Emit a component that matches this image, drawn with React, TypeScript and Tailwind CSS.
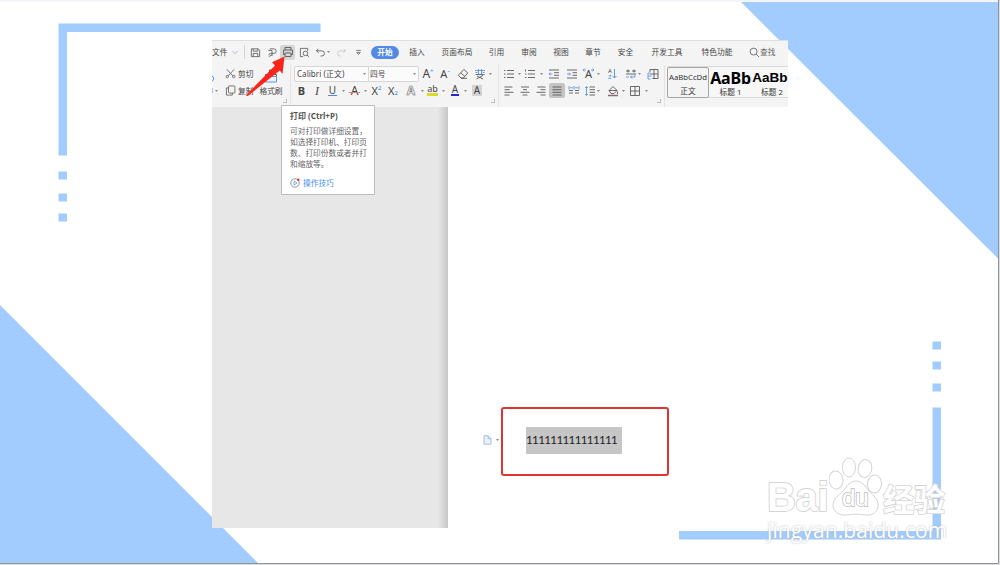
import type { ReactNode } from 'react'

const INK = '#5a5a5a'
const BLUE = '#5b97e6'

const tabs = [
  { label: '插入', width: 'w-9' },
  { label: '页面布局', width: 'w-11' },
  { label: '引用', width: 'w-[35px]' },
  { label: '审阅', width: 'w-[30px]' },
  { label: '视图', width: 'w-[34px]' },
  { label: '章节', width: 'w-[30px]' },
  { label: '安全', width: 'w-[35px]' },
  { label: '开发工具', width: 'w-12' },
  { label: '特色功能', width: 'w-[52px]' },
]

function Cell({ w, children }: { w: string; children?: ReactNode }) {
  return <div className={`flex h-full shrink-0 items-center justify-center ${w}`}>{children}</div>
}

function Icon({ children, color = INK, size = 'size-3' }: { children: ReactNode; color?: string; size?: string }) {
  return (
    <svg className={`shrink-0 ${size}`} viewBox="0 0 12 12" fill="none" stroke={color} strokeWidth={0.9}>
      {children}
    </svg>
  )
}

function Caret({ w = 'w-1' }: { w?: string }) {
  return (
    <Cell w={w}>
      <svg className="h-[2px] w-[3px] shrink-0" viewBox="0 0 3 2">
        <path d="M0 0h3L1.5 2z" fill="#8a8a8a" />
      </svg>
    </Cell>
  )
}

function Corner() {
  return (
    <svg className="absolute bottom-[4px] right-[3px] size-1" viewBox="0 0 4 4" fill="none" stroke="#aaa" strokeWidth={0.8}>
      <path d="M3.5 0v3.5H0" />
    </svg>
  )
}

function Backdrop() {
  return (
    <svg className="absolute inset-0 h-[565px] w-[1000px]" viewBox="0 0 1000 565" fill="#a2cbfe">
      <rect width="1000" height="1.5" fill="#f1f1fb" />
      <path d="M741 2H998V258.500Z" />
      <path d="M0 305L258 563H0Z" />
      <path d="M58.500 23.500H320.500V32H67V155.500H58.500Z" />
      <path d="M58.500 171.500h8.500v8h-8.500zM58.500 193.500h8.500v8h-8.500zM58.500 213.500h8.500v8h-8.500z" />
      <path d="M932.500 341.500h8.500v8h-8.500zM932.500 361.500h8.500v8h-8.500zM932.500 383.500h8.500v8h-8.500z" />
      <path d="M932.500 407.500H941V539.500H679V531H932.500Z" />
      <path d="M0 563.500H998.500V0" fill="none" stroke="#8f949b" />
      <path d="M0 564.500H999.500V0" fill="none" stroke="#dcdcdc" />
    </svg>
  )
}

function TabRow() {
  return (
    <div className="flex h-6 items-center pb-[2px]">
      <span className="w-4 shrink-0">文件</span>
      <Cell w="w-[14px]">
        <Icon size="size-2" color="#999"><path d="M2 4.500l4 4 4-4" /></Icon>
      </Cell>
      <Cell w="w-[5px]"><div className="h-[14px] w-px bg-[#d4d4d4]" /></Cell>
      <Cell w="w-[17px]">
        <Icon size="size-[11px]"><path d="M1.500 2h7.500l1.500 1.500V10.500h-9zM3.500 2v2.500h5V2M3.500 10.500V7h5v3.500" /></Icon>
      </Cell>
      <Cell w="w-4">
        <Icon size="size-[11px]"><path d="M3 2h4.500a2.500 2.500 0 0 1 0 5H5.500V3.800M1.500 3.800h4M5.500 7c-2-.5-3.500.5-3.500 2M2 10.500l3.500-2M5.500 7v3" /></Icon>
      </Cell>
      <div className="flex h-[15px] w-[15px] shrink-0 items-center justify-center rounded-[2px] bg-[#d6d6d6]">
        <Icon><path d="M3 4V1.500h6V4M3 8.500H1.500V4h9v4.500H9M3 7h6v3.500H3z" /></Icon>
      </div>
      <Cell w="w-[18px]">
        <Icon size="size-[11px]"><path d="M4.500 10.500h-3v-9h8v3" /><circle cx="7" cy="7" r="2.500" /><path d="M8.800 8.800l2.200 2" /></Icon>
      </Cell>
      <div className="w-px shrink-0" />
      <Cell w="w-3">
        <Icon size="size-[11px]"><path d="M3.500 2L1.500 4.200l2.500 2M1.500 4.200H7.500a2.800 2.800 0 0 1 0 5.600H6" /></Icon>
      </Cell>
      <Caret w="w-[5px]" />
      <Cell w="w-5">
        <Icon color="#c6c6c6" size="size-[11px]"><path d="M8.500 2l2 2.200-2.500 2M10.500 4.200H4.500a2.800 2.800 0 0 0 0 5.600H5" /></Icon>
      </Cell>
      <Cell w="w-[14px]">
        <Icon size="size-[7px]"><path d="M2 2.500h8M3 6h6L6 9.500z" strokeWidth={1.300} /></Icon>
      </Cell>
      <div className="ml-[6px] flex h-[13px] w-7 shrink-0 items-center justify-center rounded-full bg-[#5289e3] font-bold text-white">
        开始
      </div>
      {tabs.map((tab) => (
        <Cell key={tab.label} w={tab.width}>{tab.label}</Cell>
      ))}
      <div className="ml-[6px] flex shrink-0 items-center">
        <Icon size="size-[11px]"><circle cx="5" cy="5" r="3.800" /><path d="M7.800 7.800l3.200 3.200" /></Icon>
        <span className="text-[#666]">查找</span>
      </div>
    </div>
  )
}

function ClipboardGroup() {
  return (
    <div className="relative flex w-[78px] shrink-0">
      <div className="w-[10px]">
        <div className="flex h-[17px] items-end">
          <svg className="size-[6px]" viewBox="0 0 6 6" fill="none" stroke={BLUE}><path d="M0 .5h1q2 2.500-1 5" /></svg>
        </div>
        <div className="flex h-[17px] items-center">
          <div className="h-[5px] w-[1px] bg-[#a9c8f2]" />
          <Caret w="w-[7px]" />
        </div>
      </div>
      <div className="w-[34px]">
        <div className="flex h-[17px] items-center">
          <Cell w="w-4">
            <Icon size="size-[11px]"><path d="M2 1.500l6.500 7M10 1.500L3.500 8.500" /><circle cx="2.500" cy="9.300" r="1.300" /><circle cx="9.500" cy="9.300" r="1.300" /></Icon>
          </Cell>
          剪切
        </div>
        <div className="flex h-[17px] items-center">
          <Cell w="w-4">
            <Icon size="size-[11px]"><rect x="3.800" y="1" width="7" height="7.800" rx="1" /><path d="M3.800 3.200H1.500V11h6.500V8.800" /></Icon>
          </Cell>
          复制
        </div>
      </div>
      <div className="flex w-[30px] flex-col items-center">
        <div className="flex h-[18px] items-end">
          <svg className="h-[14px] w-[14px]" viewBox="0 0 14 14" fill="none" stroke={INK}>
            <path d="M1.500 7.500v-2h4V1H8.500v4.500h4v2" />
            <path d="M1.500 7.500h11v5.500h-11z" stroke={BLUE} fill="#eaf3ff" />
          </svg>
        </div>
        <span className="flex h-4 items-center">格式刷</span>
      </div>
      <Corner />
    </div>
  )
}

function FontGroup() {
  return (
    <div className="relative w-[208px] shrink-0 border-l border-[#e4e4e4] pl-[3px]">
      <div className="flex h-[17px] items-center">
        <div className="flex h-4 w-[75px] shrink-0 items-center justify-between rounded-l-[2px] border border-[#d6d6d6] bg-[#fbfbfb] pl-[2px] pr-[2px]">
          <span className="text-[8px] tracking-[0.050px]">Calibri (正文)</span>
          <Caret />
        </div>
        <div className="flex h-4 w-[50px] shrink-0 items-center justify-between rounded-r-[2px] border border-l-0 border-[#d6d6d6] bg-[#fbfbfb] pl-[1px] pr-[2px]">
          <span>四号</span>
          <Caret />
        </div>
        <Cell w="w-[18px]">
          <span className="text-[12px]">A</span><span className="mb-[5px] text-[6px] text-[#3f86e0]">+</span>
        </Cell>
        <Cell w="w-4">
          <span className="text-[11px]">A</span><span className="mb-[5px] text-[7px] text-[#3f86e0]">-</span>
        </Cell>
        <Cell w="w-5">
          <Icon><path d="M6.800 1.500l4 3.500-4.500 5H4L1.300 7.300zM3.800 4.800l4 3.600M4 10.300h6" /></Icon>
        </Cell>
        <Cell w="w-[14px]">
          <Icon color={BLUE}>
            <path d="M1 2.500h10M4.500 1v5M7.500 1v5M1.500 4.500h2M8.500 4.500h2" />
            <path d="M1.500 6.500h9M3 8l6 3M9 7.500L2.500 11" stroke={INK} />
          </Icon>
        </Cell>
        <Caret w="w-[6px]" />
      </div>
      <div className="flex h-[17px] items-center">
        <Cell w="w-[15px]"><span className="text-[11px] font-bold">B</span></Cell>
        <Cell w="w-4"><span className="font-['Liberation_Serif'] text-[12px] italic">I</span></Cell>
        <Cell w="w-[15px]"><span className="border-b border-[#4a8be0] px-px text-[10px] leading-[9px]">U</span></Cell>
        <Caret w="w-[6px]" />
        <Cell w="w-[17px]">
          <span className="relative text-[12px]">
            A
            <span className="absolute -left-[2px] -right-[2px] top-[7px] h-px bg-[#e58080]" />
          </span>
        </Cell>
        <Caret />
        <Cell w="w-[19px]">
          <span className="text-[11px]">X</span><span className="mb-[5px] text-[6px] text-[#3f86e0]">2</span>
        </Cell>
        <Cell w="w-[14px]">
          <span className="text-[11px]">X</span><span className="mt-[5px] text-[6px] text-[#3f86e0]">2</span>
        </Cell>
        <Cell w="w-5 pl-[2px]">
          <span className="text-[12px] font-bold text-[#f4f4f4] [-webkit-text-stroke:0.6px_#666]">A</span>
        </Cell>
        <Caret />
        <Cell w="w-[17px]">
          <span className="border-b-[3px] border-[#dbd92a] text-[9px] leading-[8px]">ab</span>
        </Cell>
        <Caret />
        <Cell w="w-[18px] pl-[2px]">
          <span className="border-b-2 border-[#2626d8] px-px text-[10px] leading-[9px]">A</span>
        </Cell>
        <Caret />
        <Cell w="w-5">
          <span className="bg-[#d4d4d4] px-[2px] text-[10px] leading-[11px]">A</span>
        </Cell>
      </div>
      <Corner />
    </div>
  )
}

function ParagraphGroup() {
  return (
    <div className="relative w-[166px] shrink-0 border-l border-[#e4e4e4] pl-[2px]">
      <div className="flex h-[17px] items-center">
        <Cell w="w-4"><Icon><path d="M4 2.500h7M4 6h7M4 9.500h7M1 2.500h1.500M1 6h1.500M1 9.500h1.500" /></Icon></Cell>
        <Caret />
        <Cell w="w-[18px]"><Icon><path d="M4 2.500h7M4 6h7M4 9.500h7M1.500 1.500v2M1 6h1.500M1 9.500h1.500" /></Icon></Cell>
        <Caret />
        <Cell w="w-[22px]">
          <Icon><path d="M1 2h10M6 4.700h5M6 7.300h5M1 10h10" /><path d="M4.500 6H1M2.500 4.500L1 6l1.500 1.500" stroke={BLUE} /></Icon>
        </Cell>
        <Cell w="w-[13px]">
          <Icon><path d="M1 2h10M6.500 4.700h4.500M6.500 7.300h4.500M1 10h10" /><path d="M1 6h3.500M3 4.500L4.500 6 3 7.500" stroke={BLUE} /></Icon>
        </Cell>
        <Cell w="w-[19px] pl-[2px]">
          <span className="relative text-[11px]">
            A
            <svg className="absolute -left-[3px] top-0 h-[4px] w-[13px]" viewBox="0 0 12 4" fill="none" stroke={BLUE} strokeWidth={0.8}>
              <path d="M2 .5L.5 2 2 3.500M.5 2h3M10 .5L11.500 2 10 3.500M11.500 2h-3" />
            </svg>
          </span>
        </Cell>
        <Caret w="w-[3px]" />
        <Cell w="w-[25px]">
          <span className="flex flex-col text-[6px] leading-[6px]">
            <span>A</span>
            <span className="text-[#3f86e0]">Z</span>
          </span>
          <svg className="h-[10px] w-[5px]" viewBox="0 0 5 10" fill="none" stroke={BLUE}><path d="M2.500 0v9M.5 7l2 2 2-2" /></svg>
        </Cell>
        <Cell w="w-3">
          <Icon><path d="M1 3h4M7 3h4M3 1.500v3M9 1.500v3M1 6h10" /><path d="M10 6v3H5.500M7 7.500L5.500 9 7 10.500M1 9h3" stroke={BLUE} /></Icon>
        </Cell>
        <Caret w="w-[5px]" />
        <Cell w="w-[22px]">
          <Icon><path d="M3 4V1.500h8v9H5.500M7 1.500v9M3 6h8" /><path d="M3.500 5H1v6h2.500M1 8h3.500" stroke={BLUE} /></Icon>
        </Cell>
      </div>
      <div className="flex h-[17px] items-center">
        <Cell w="w-4"><Icon><path d="M1.500 2h8M1.500 4.700h5M1.500 7.300h9M1.500 10h5" /></Icon></Cell>
        <Cell w="w-4"><Icon><path d="M2 2h8M4 4.700h4M1.500 7.300h9M3.500 10h5" /></Icon></Cell>
        <Cell w="w-4"><Icon><path d="M2.500 2h8M5.500 4.700h5M1.500 7.300h9M5.500 10h5" /></Icon></Cell>
        <div className="flex h-[15px] w-4 shrink-0 items-center justify-center rounded-[2px] bg-[#c4c4c4]">
          <Icon><path d="M1.500 2h9M1.500 4.700h9M1.500 7.300h9M1.500 10h9" /></Icon>
        </div>
        <Cell w="w-[17px]">
          <Icon><path d="M1 5.500h4M7 5.500h4M1 8h4M7 8h4" /><path d="M1 1v3.500M11 1v3.500M6 1v3.500M2 2.800h3M7 2.800h3" stroke={BLUE} /></Icon>
        </Cell>
        <Cell w="w-[15px]">
          <Icon><path d="M5.500 2H11M5.500 4.700H11M5.500 7.300H11M5.500 10H11" /><path d="M2.500 1.500v9M1 3l1.500-1.500L4 3M1 9l1.500 1.500L4 9" stroke={BLUE} /></Icon>
        </Cell>
        <Caret w="w-[3px]" />
        <Cell w="w-[21px] pl-1">
          <Icon><path d="M2 5.500L6 1.500l4 4-3 3H4zM2 5.500h8M10.500 6.500v2.500" /><path d="M1 10.500h10" stroke="#8a6a6a" strokeWidth={1.500} /></Icon>
        </Cell>
        <Caret />
        <Cell w="w-[20px]"><Icon><path d="M1.500 1.500h9v9h-9zM6 1.500v9M1.500 6h9" /></Icon></Cell>
        <Caret w="w-[3px]" />
      </div>
      <Corner />
    </div>
  )
}

function StyleGallery() {
  return (
    <div className="w-[124px] shrink-0 overflow-hidden border-l border-[#e4e4e4] pl-[2px] pt-px">
      <div className="flex h-8 items-center border-y border-[#dadada] bg-[#f7f7f7] text-black">
        <div className="flex h-[31px] w-[42px] shrink-0 flex-col items-center rounded-[2px] border border-[#a6a6a6] bg-[#f4f4f4]">
          <span className="flex h-[19px] items-center whitespace-nowrap text-[7.700px] text-[#333]">AaBbCcDd</span>
          <span className="leading-[9px] text-[#333]">正文</span>
        </div>
        <div className="flex w-[43px] shrink-0 flex-col items-center">
          <span className="flex h-5 items-center text-[16px] font-bold tracking-[-0.200px]">AaBb</span>
          <span className="leading-[9px] text-[#333]">标题 1</span>
        </div>
        <div className="flex w-[36px] shrink-0 flex-col items-center">
          <span className="flex h-5 items-center font-['Liberation_Sans'] text-[13.500px] font-bold">AaBb</span>
          <span className="pl-1 leading-[9px] text-[#333]">标题 2</span>
        </div>
      </div>
    </div>
  )
}

function PrintTooltip() {
  return (
    <div className="absolute left-[69px] top-[65px] h-[90px] w-[94px] border border-[#bdbdbd] bg-white pl-[8px] pt-[4px] text-[#666]">
      <p className="text-[8px] font-bold leading-[11px] text-[#555]">打印 (Ctrl+P)</p>
      <p className="mt-[5px] whitespace-nowrap text-[7.700px] leading-[11px]">
        可对打印做详细设置，<br />
        如选择打印机、打印页<br />
        数、打印份数或者并打<br />
        和缩放等。
      </p>
      <div className="mt-[7px] flex items-center gap-[3px] leading-[12px] text-[#3d8df5]">
        <svg className="size-[10px]" viewBox="0 0 10 10" fill="none" stroke="#888" strokeWidth={0.9}>
          <circle cx="5" cy="5" r="4.200" />
          <path d="M4 3v4l3-2z" stroke={BLUE} strokeWidth={0.8} />
          <circle cx="8.300" cy="1.700" r="1.300" fill="#e33" stroke="none" />
        </svg>
        操作技巧
      </div>
    </div>
  )
}

function RedArrow() {
  return (
    <svg className="absolute left-[32px] top-[12px] h-[46px] w-[44px]" viewBox="0 0 44 46">
      <path d="M40.500 4.500L28 10.300L31 13.500L1.800 43.500L3.800 44L35.800 18.500L38.500 22Z" fill="#f8261a" />
    </svg>
  )
}

function DocumentArea() {
  return (
    <div className="flex h-[421px]">
      <div className="flex w-[236px] shrink-0 justify-end bg-[#e7e7e7]">
        <div className="w-[10px] bg-linear-to-r from-[#e7e7e7] to-[#c6c6c6]" />
      </div>
      <div className="flex flex-1 items-start bg-white pl-[35px] pt-[300px]">
        <div className="mt-[28px] flex w-[18px] items-center gap-[3px]">
          <svg className="h-[10px] w-[9px]" viewBox="0 0 9 10" fill="#eaf1fc" stroke="#9db9e3" strokeWidth={0.9}>
            <path d="M1 .8h4.500L8 3.300V9.200H1zM5.200 1v2.700H8" />
          </svg>
          <Caret />
        </div>
        <div className="h-[69px] w-[168px] rounded-[3px] border-2 border-[#e03434] pl-[23px] pt-[18px]">
          <div className="flex h-[27px] w-24 items-center bg-[#c6c6c6] pb-px font-['Lato'] text-[11.500px] tracking-[-0.590px] text-[#222]">
            111111111111111
          </div>
        </div>
      </div>
    </div>
  )
}

function Watermark() {
  return (
    <div className="absolute left-[767px] top-[456px] h-[90px] w-[190px] text-white">
      <div className="flex h-[60px] items-end whitespace-nowrap">
        <span className="w-[62px] shrink-0 font-['Liberation_Sans'] text-[40px] font-bold leading-[38px] tracking-[-0.300px] [-webkit-text-stroke:1.8px_#d4d4d4] [paint-order:stroke_fill]">
          Bai
        </span>
        <div className="relative h-[60px] w-[54px] shrink-0">
          <svg className="h-[62px] w-[54px]" viewBox="0 0 54 62" fill="#fff" stroke="#d4d4d4" strokeWidth={1}>
            <ellipse cx="7" cy="24" rx="7" ry="9" transform="rotate(-8 7 24)" />
            <ellipse cx="20" cy="11.500" rx="6.500" ry="9.500" />
            <ellipse cx="36" cy="12.500" rx="6.800" ry="9" transform="rotate(10 36 12.500)" />
            <ellipse cx="45.500" cy="28" rx="7" ry="9" transform="rotate(6 45.500 28)" />
            <path d="M27 25c6 0 9 5 13 10c5 5 9 8 9 14c0 7-5 10-11 10c-4 0-7-1-11-1s-7 1-11 1c-6 0-12-3-12-10c0-6 5-9 10-14c4-5 7-10 13-10z" />
          </svg>
          <span className="absolute left-[13px] top-[30px] font-['Liberation_Sans'] text-[24px] leading-[24px] [-webkit-text-stroke:1.8px_#c8c8c8] [paint-order:stroke_fill]">
            du
          </span>
        </div>
        <span className="pb-[3px] font-['Noto_Sans_CJK_SC'] text-[31px] font-bold leading-[31px] [-webkit-text-stroke:1.6px_#d4d4d4] [paint-order:stroke_fill]">
          经验
        </span>
      </div>
      <p className="mt-px font-['Open_Sans'] text-[21px] leading-[26px] tracking-[0.100px] [text-shadow:0_0_2px_#b0b0b0]">
        jingyan.baidu.com
      </p>
    </div>
  )
}

export default function App() {
  return (
    <div className="relative h-[565px] w-[1000px] overflow-hidden bg-white">
      <Backdrop />
      <main className="relative ml-[212px] mt-[40px] w-[576px] font-['Noto_Sans','Noto_Sans_CJK_SC',sans-serif] text-[7.700px] text-[#444]">
        <div className="h-[67px] overflow-hidden whitespace-nowrap border-t border-[#dcdfe4] bg-[#f4f4f4] leading-[12px]">
          <TabRow />
          <div className="flex h-[42px]">
            <ClipboardGroup />
            <FontGroup />
            <ParagraphGroup />
            <StyleGallery />
          </div>
        </div>
        <DocumentArea />
        <PrintTooltip />
        <RedArrow />
      </main>
      <Watermark />
    </div>
  )
}
